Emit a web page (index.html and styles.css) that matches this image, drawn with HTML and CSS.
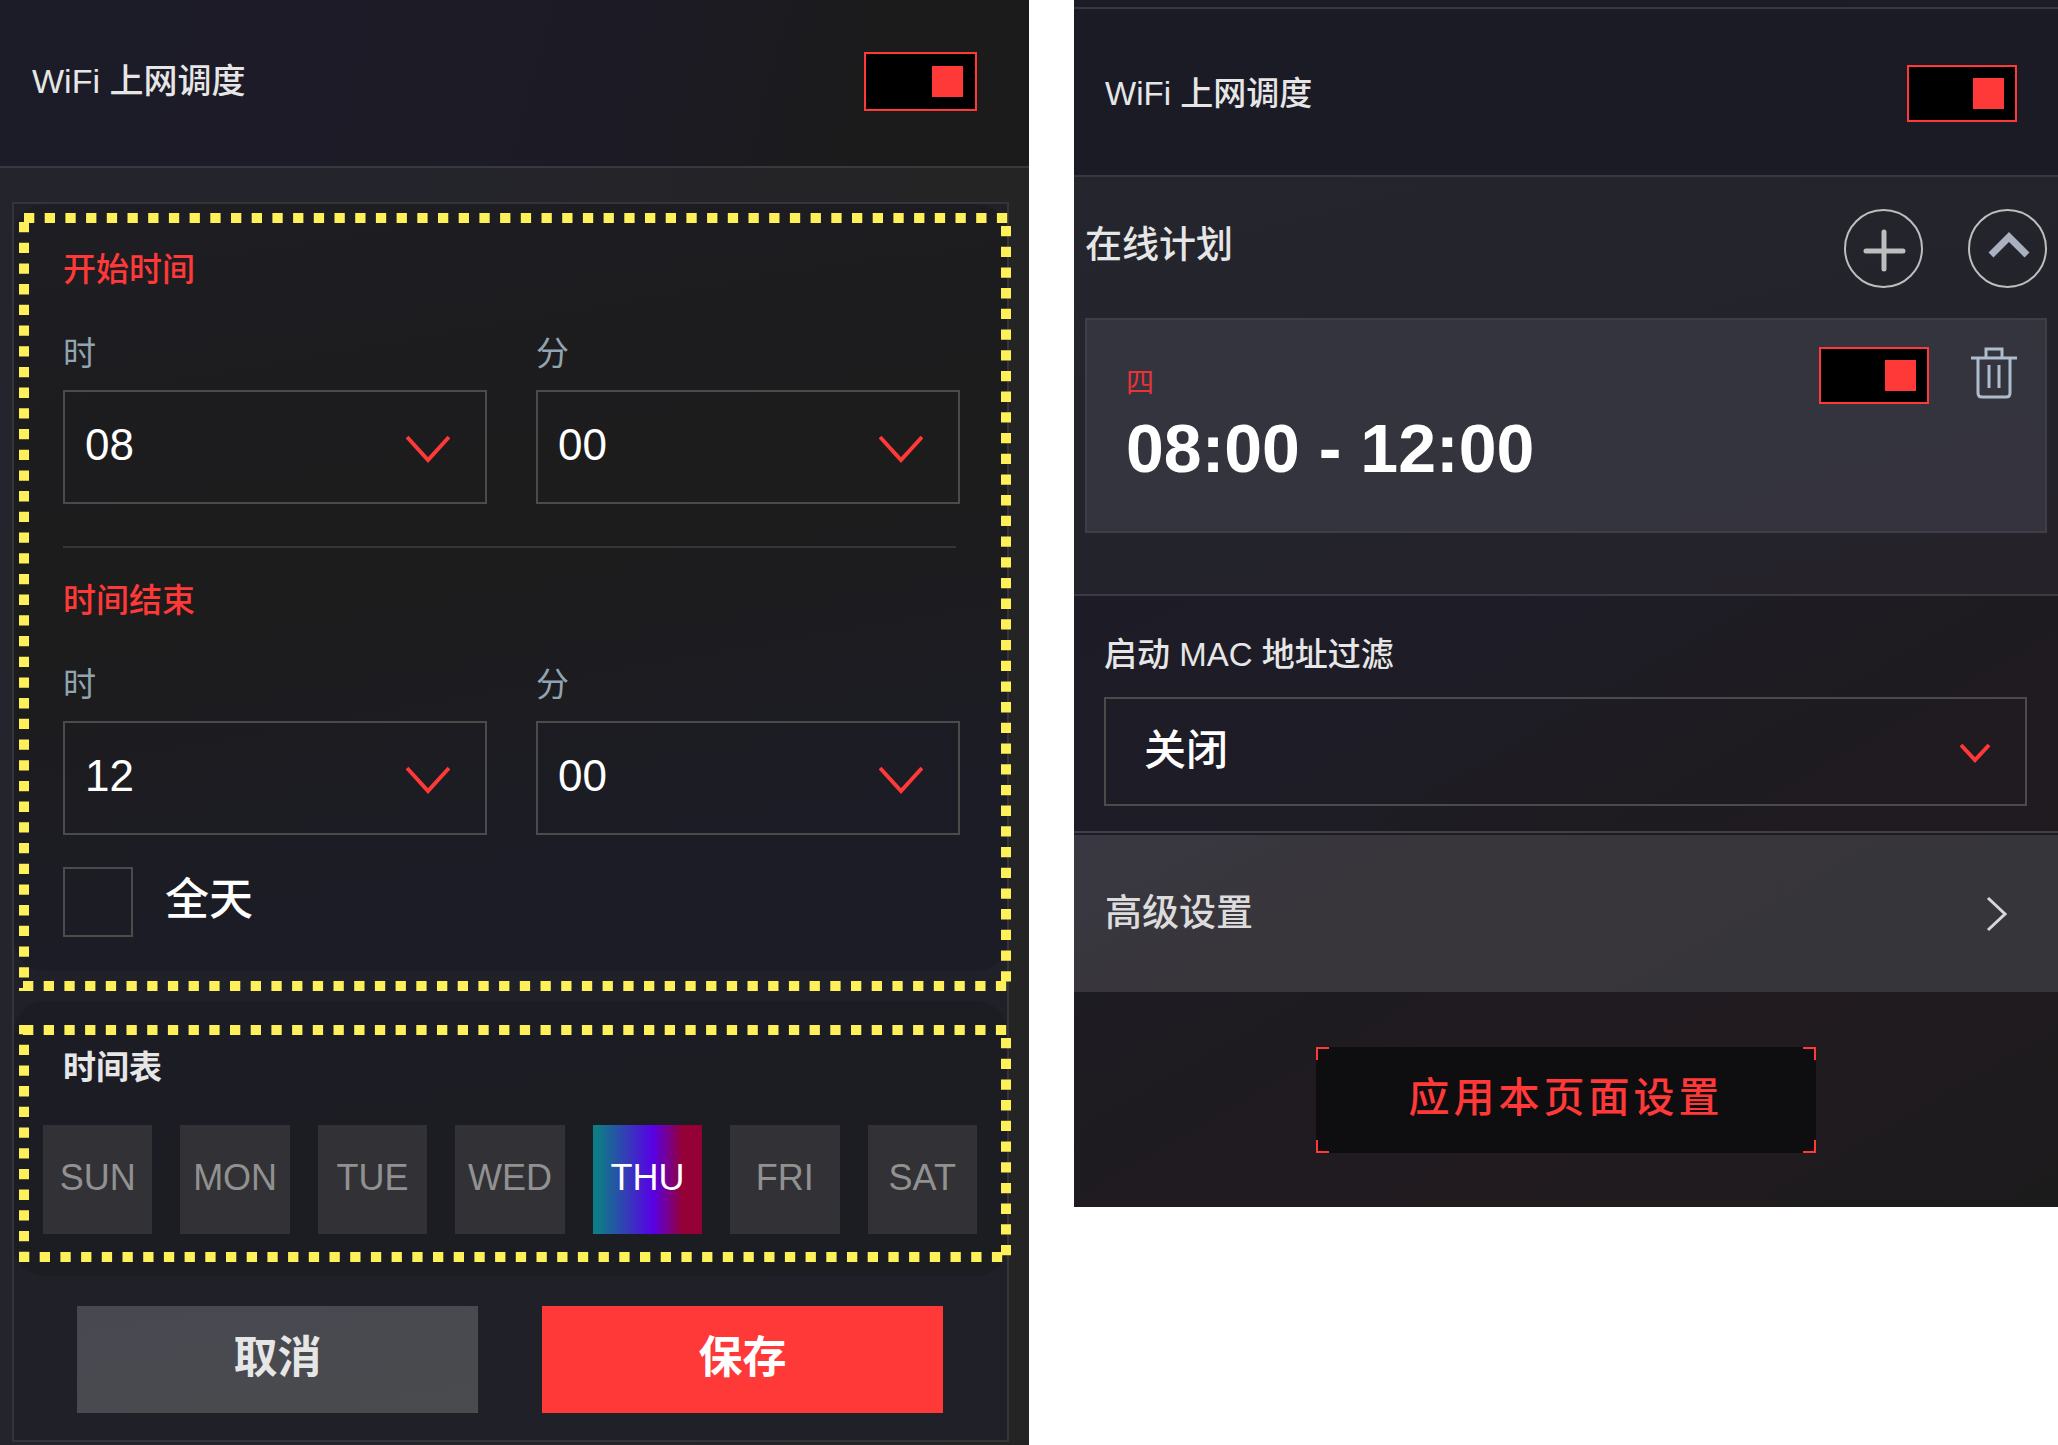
FILE: index.html
```html
<!DOCTYPE html>
<html lang="zh-CN">
<head>
    <meta charset="UTF-8">
    <meta name="viewport" content="width=device-width, initial-scale=1.0">
    <title>WiFi 上网调度</title>
    <link rel="stylesheet" href="styles.css">
</head>
<body>
    <main class="screens">
        <!-- Schedule editor -->
        <section class="panel editor">
            <header class="panel-header">
                <label for="editSchedule">WiFi 上网调度</label>
                <input type="checkbox" class="toggle toggle-large" id="editSchedule" checked>
            </header>

            <form class="editor-card">
                <div class="group times">
                    <h2 class="group-title">开始时间</h2>
                    <div class="fields">
                        <div class="field">
                            <label for="startHour">时</label>
                            <div class="select">
                                <select id="startHour"><option>08</option></select>
                                <svg class="arrow" viewBox="0 0 44 28"><path d="M1 2 L22 25 L43 2"/></svg>
                            </div>
                        </div>
                        <div class="field">
                            <label for="startMinute">分</label>
                            <div class="select">
                                <select id="startMinute"><option>00</option></select>
                                <svg class="arrow" viewBox="0 0 44 28"><path d="M1 2 L22 25 L43 2"/></svg>
                            </div>
                        </div>
                    </div>
                    <hr>
                    <h2 class="group-title">时间结束</h2>
                    <div class="fields">
                        <div class="field">
                            <label for="endHour">时</label>
                            <div class="select">
                                <select id="endHour"><option>12</option></select>
                                <svg class="arrow" viewBox="0 0 44 28"><path d="M1 2 L22 25 L43 2"/></svg>
                            </div>
                        </div>
                        <div class="field">
                            <label for="endMinute">分</label>
                            <div class="select">
                                <select id="endMinute"><option>00</option></select>
                                <svg class="arrow" viewBox="0 0 44 28"><path d="M1 2 L22 25 L43 2"/></svg>
                            </div>
                        </div>
                    </div>
                    <div class="all-day">
                        <input type="checkbox" id="allDay">
                        <label for="allDay">全天</label>
                    </div>
                    <svg class="highlight" aria-hidden="true">
                        <line x1="5" y1="0" x2="100%" y2="0"/>
                        <line x1="0" y1="9" x2="0" y2="100%"/>
                        <line x1="100%" y1="13" x2="100%" y2="100%"/>
                        <line x1="4" y1="100%" x2="100%" y2="100%"/>
                    </svg>
                </div>

                <div class="group days">
                    <h2 class="group-title">时间表</h2>
                    <div class="day-list">
                        <button type="button" class="day">SUN</button>
                        <button type="button" class="day">MON</button>
                        <button type="button" class="day">TUE</button>
                        <button type="button" class="day">WED</button>
                        <button type="button" class="day active">THU</button>
                        <button type="button" class="day">FRI</button>
                        <button type="button" class="day">SAT</button>
                    </div>
                    <svg class="highlight" aria-hidden="true">
                        <line x1="4" y1="0" x2="100%" y2="0"/>
                        <line x1="0" y1="-1" x2="0" y2="100%"/>
                        <line x1="100%" y1="13" x2="100%" y2="100%"/>
                        <line x1="0" y1="100%" x2="100%" y2="100%"/>
                    </svg>
                </div>

                <div class="actions">
                    <button type="button" class="cancel">取消</button>
                    <button type="button" class="save">保存</button>
                </div>
            </form>
        </section>

        <!-- Schedule overview -->
        <section class="panel overview">
            <header class="panel-header">
                <label for="schedule">WiFi 上网调度</label>
                <input type="checkbox" class="toggle" id="schedule" checked>
            </header>

            <div class="plans">
                <div class="plans-header">
                    <h2>在线计划</h2>
                    <button type="button" class="round" aria-label="添加">
                        <svg viewBox="0 0 80 80"><path class="plus" d="M40 23 V60 M22 42 H59"/></svg>
                    </button>
                    <button type="button" class="round" aria-label="收起">
                        <svg viewBox="0 0 80 80"><path class="up" d="M23 46 L41 28 L59 46"/></svg>
                    </button>
                </div>
                <article class="plan">
                    <div class="plan-info">
                        <p class="plan-day">四</p>
                        <p class="plan-time">08:00 - 12:00</p>
                    </div>
                    <input type="checkbox" class="toggle" aria-label="启用" checked>
                    <button type="button" class="trash" aria-label="删除">
                        <svg viewBox="0 0 46 52">
                            <path d="M0 11 H46 M15 11 V2 H31 V11 M7 11 V46 Q7 50 11 50 H35 Q39 50 39 46 V11"/>
                            <path d="M18 18 V41 M28 18 V41"/>
                        </svg>
                    </button>
                </article>
            </div>

            <div class="mac-filter">
                <label for="macFilter">启动 MAC 地址过滤</label>
                <div class="select">
                    <select id="macFilter"><option>关闭</option></select>
                    <svg class="arrow" viewBox="0 0 32 22"><path d="M2 2 L16 17 L30 2"/></svg>
                </div>
            </div>

            <a href="#advanced" class="advanced">
                高级设置
                <svg viewBox="0 0 22 36"><path d="M2 2 L19 18 L2 34"/></svg>
            </a>

            <button type="button" class="apply">应用本页面设置</button>
        </section>
    </main>
</body>
</html>
```
FILE: styles.css
```css
* {
    box-sizing: border-box;
}

body {
    margin: 0;
    background-color: #fff;
    color: #e6e6e6;
    font-family: "Liberation Sans", "Noto Sans CJK SC", sans-serif;
    font-size: 33px;
    font-weight: 500;
    line-height: 48px;
}

h2, p {
    margin: 0;
    font-size: inherit;
    font-weight: 500;
}

button, select {
    font: inherit;
    color: inherit;
    border: none;
    border-radius: 0;
    padding: 0;
    margin: 0;
    background: none;
    cursor: pointer;
}

svg {
    display: block;
    fill: none;
}

.screens {
    display: grid;
    grid-template-columns: 1029fr 984fr;
    gap: 45px;
    align-items: start;
}

.panel {
    background: linear-gradient(90deg, #24242d 30%, #242424);
}

.panel-header {
    display: flex;
    align-items: center;
    justify-content: space-between;
    height: 168px;
    padding: 0 52px 4px 32px;
    border-bottom: 2px solid #38383f;
    background: linear-gradient(105deg, #1c1b28 10%, #1c1b25 60%, #1b1b1b 85%);
    font-size: 34px;
}

/* Square switch */
.toggle {
    appearance: none;
    display: flex;
    align-items: center;
    justify-content: flex-end;
    width: 110px;
    height: 57px;
    margin: 0;
    padding: 0 11px;
    border: 2px solid #ff3838;
    background-color: #000;
    cursor: pointer;
}

.toggle::before {
    content: "";
    width: 31px;
    height: 31px;
    background-color: #ff3838;
}

.toggle-large {
    width: 113px;
    height: 59px;
    padding: 0 12px;
}

/* Drop-down with its own arrow */
.select {
    display: grid;
    align-items: center;
    border: 2px solid #4b4b4b;
}

.select select {
    appearance: none;
    grid-area: 1 / 1;
    width: 100%;
    height: 110px;
    padding: 0 20px 4px;
    color: #fff;
    font-size: 44px;
}

.arrow {
    grid-area: 1 / 1;
    justify-self: end;
    width: 44px;
    height: 28px;
    margin: 4px 35px 0 0;
    stroke: #ff3838;
    stroke-width: 4;
    pointer-events: none;
}

/* Editor */
.editor {
    padding-bottom: 3px;
}

.editor-card {
    margin: 34px 20px 0 12px;
    border: 2px solid #34343a;
    background-color: #202029;
}

.group {
    position: relative;
    border-radius: 30px;
}

.times {
    padding: 42px 47px 34px 49px;
    background: linear-gradient(170deg, #1d1d23, #1c1c1c 45%, #1c1c26 80%);
}

.times .group-title {
    color: #ff3838;
}

.fields {
    display: grid;
    grid-template-columns: 1fr 1fr;
    gap: 49px;
    margin-top: 36px;
}

.field {
    display: grid;
    gap: 12px;
    color: #92a4b0;
}

.field label {
    font-weight: 400;
}

.times hr {
    height: 2px;
    margin: 42px 4px 29px 0;
    border: none;
    background-color: #34343b;
}

.all-day {
    display: flex;
    align-items: center;
    gap: 32px;
    margin-top: 32px;
    color: #fff;
    font-size: 44px;
}

.all-day input {
    appearance: none;
    width: 70px;
    height: 70px;
    margin: 0;
    border: 2px solid #4b4b4b;
}

.all-day label {
    padding-bottom: 4px;
}

.days {
    margin-top: 30px;
    padding: 43px 30px 42px 29px;
    background: linear-gradient(170deg, #1c1c25, #1c1d21);
}

.days .group-title {
    padding-left: 20px;
    font-weight: 700;
}

.day-list {
    display: grid;
    grid-template-columns: repeat(7, 1fr);
    gap: 28px;
    margin-top: 33px;
}

.day {
    height: 109px;
    padding-bottom: 3px;
    background-color: #323136;
    color: #919191;
    font-size: 36px;
}

.day.active {
    background: linear-gradient(90deg, #0e7c87 5%, #5800e6 55%, #950037 82%);
    color: #fff;
}

/* Dotted frame drawn over a group */
.highlight {
    position: absolute;
    left: 5px;
    width: 992px;
    stroke: #fdf059;
    stroke-width: 20;
    stroke-dasharray: 10.3 10.4;
    pointer-events: none;
}

.times .highlight {
    top: 9px;
    height: calc(100% + 11px);
}

.days .highlight {
    top: 24px;
    height: calc(100% - 38px);
}

.actions {
    display: grid;
    grid-template-columns: 1fr 1fr;
    gap: 64px;
    padding: 30px 64px 27px 63px;
}

.actions button {
    height: 107px;
    padding-bottom: 4px;
    font-size: 44px;
    font-weight: 700;
}

.cancel {
    background: linear-gradient(170deg, #484852, #4a4b4d);
}

.actions .save {
    background-color: #ff3838;
    color: #fff;
}

/* Overview */
.overview {
    padding-bottom: 54px;
    background: linear-gradient(150deg, #1c1c26, #1e1c26 50%, #1e1b20 65%, #211b20 80%, #1c1b1c);
}

.overview .panel-header {
    padding: 3px 41px 0 31px;
    margin-top: 7px;
    height: 170px;
    border-top: 2px solid #38383f;
    background: #1b1b26;
    font-size: 33px;
}

.plans {
    padding: 32px 11px 61px;
    border-bottom: 2px solid #3c3b44;
    background: linear-gradient(165deg, #24252d, #23232b 60%, #26222a);
}

.plans-header {
    display: flex;
    align-items: center;
    gap: 45px;
    margin-bottom: 30px;
    font-size: 37px;
}

.plans-header h2 {
    flex: 1;
    padding-bottom: 6px;
}

.round {
    width: 79px;
    height: 79px;
    border: 2px solid #bebebe;
    border-radius: 50%;
}

.round svg {
    width: 80px;
    height: 80px;
    margin: -2px;
}

.plus {
    stroke: #bebebe;
    stroke-width: 5;
    stroke-linecap: round;
}

.up {
    stroke: #a9b0bf;
    stroke-width: 7;
}

.plan {
    display: flex;
    align-items: flex-start;
    min-height: 215px;
    padding: 27px 28px 27px 39px;
    border: 2px solid #3e3e47;
    background: linear-gradient(165deg, #33343d, #35343e);
}

.plan-info {
    flex: 1;
    padding-top: 13px;
}

.plan-day {
    color: #e63439;
    font-size: 28px;
    font-weight: 400;
}

.plan-time {
    margin-top: 4px;
    color: #fff;
    font-size: 68px;
    font-weight: 700;
    line-height: 72px;
}

.trash {
    margin-left: 42px;
}

.trash svg {
    width: 46px;
    height: 52px;
    stroke: #aebccd;
    stroke-width: 3;
}

.mac-filter {
    display: grid;
    gap: 18px;
    padding: 35px 31px 25px 30px;
    border-bottom: 2px solid #403f47;
}

.mac-filter .select select {
    height: 105px;
    padding: 0 38px 2px;
    font-size: 42px;
}

.mac-filter .arrow {
    width: 32px;
    height: 22px;
    margin-right: 34px;
}

.advanced {
    display: flex;
    align-items: center;
    justify-content: space-between;
    height: 157px;
    margin-top: 2px;
    padding: 0 50px 0 31px;
    background: linear-gradient(150deg, #393741, #38363b 30%, #363539);
    color: #dcdcdc;
    font-size: 37px;
    text-decoration: none;
}

.advanced svg {
    width: 22px;
    height: 36px;
    stroke: #d8d8d8;
    stroke-width: 3;
}

/* Only the four corners of the button are outlined */
.apply {
    --red: linear-gradient(#ff3838, #ff3838);
    display: block;
    width: 500px;
    height: 106px;
    margin: 55px auto 0;
    padding-bottom: 4px;
    background:
        var(--red) 0 0 / 13px 2px, var(--red) 0 0 / 2px 13px,
        var(--red) 100% 0 / 13px 2px, var(--red) 100% 0 / 2px 13px,
        var(--red) 0 100% / 13px 2px, var(--red) 0 100% / 2px 13px,
        var(--red) 100% 100% / 13px 2px, var(--red) 100% 100% / 2px 13px;
    background-color: #0e0d0f;
    background-repeat: no-repeat;
    color: #ff3838;
    font-size: 41px;
    letter-spacing: 4px;
}
```
